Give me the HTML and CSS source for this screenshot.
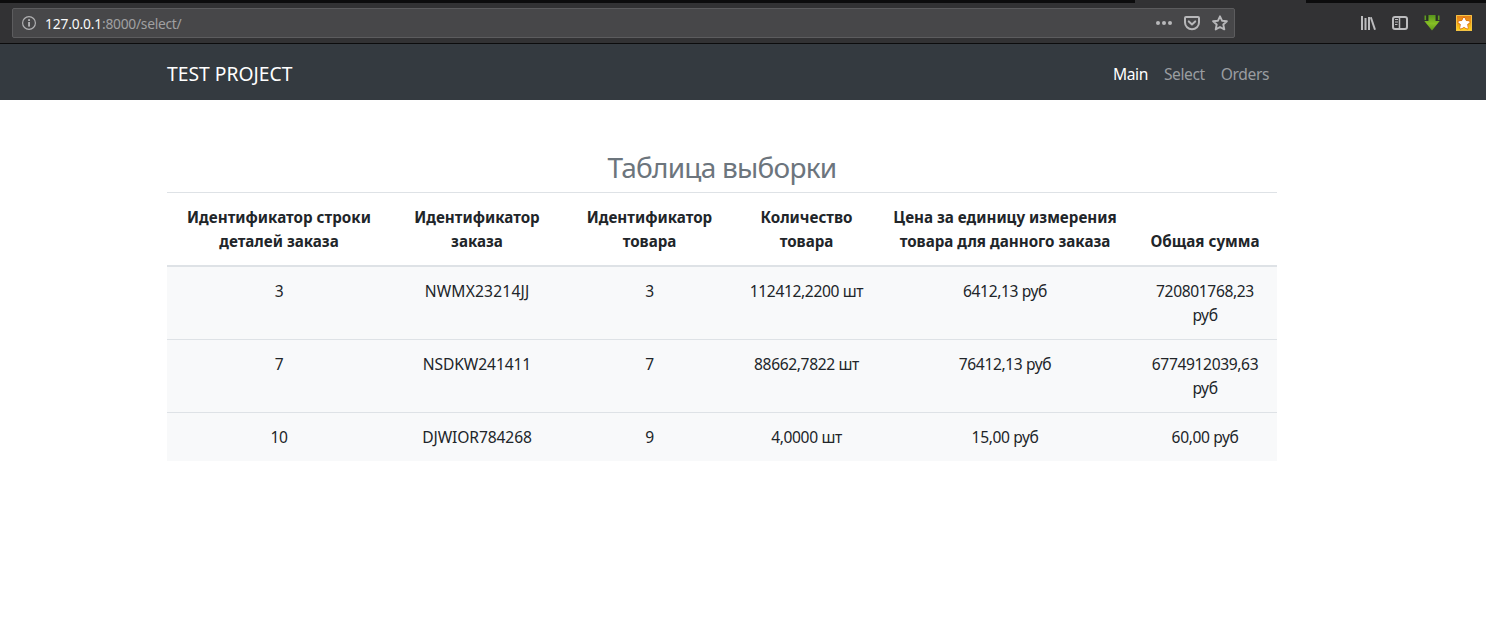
FILE: index.html
```
<!DOCTYPE html>
<html lang="ru">
<head>
<meta charset="utf-8">
<title>Test project</title>
<link rel="stylesheet" href="styles.css">
</head>
<body>
<div class="tabstrip"><div class="tab-active"></div></div>
<div class="toolbar">
  <div class="urlbar">
    <svg class="icon-info" width="16" height="16" viewBox="0 0 16 16"><circle cx="8" cy="8" r="6.4" fill="none" stroke="#b1b1b3" stroke-width="1.2"/><rect x="7.1" y="7" width="1.9" height="4.6" fill="#b1b1b3"/><rect x="7.1" y="4.2" width="1.9" height="1.8" fill="#b1b1b3"/></svg>
    <div class="url"><span class="host">127.0.0.1</span><span class="path">:8000/select/</span></div>
    <div class="page-actions">
      <svg width="16" height="16" viewBox="0 0 16 16" fill="#b8b8ba"><circle cx="2" cy="8" r="2"/><circle cx="8" cy="8" r="2"/><circle cx="14" cy="8" r="2"/></svg>
      <svg width="16" height="16" viewBox="0 0 16 16" fill="none" stroke="#b8b8ba" stroke-width="2" stroke-linecap="round" stroke-linejoin="round"><path d="M2 2h12a1 1 0 0 1 1 1v4.5a7 6.7 0 0 1-14 0V3a1 1 0 0 1 1-1z"/><path d="M4.8 6.4 8 9.4l3.2-3"/></svg>
      <svg width="16" height="16" viewBox="0 0 16 16" fill="none" stroke="#b8b8ba" stroke-width="1.9" stroke-linejoin="round"><path d="M8 1.3l2 4.4 4.9.5-3.6 3.3 1 4.9L8 12l-4.300 2.400 1-4.900L1.100 6.200 6 5.700z"/></svg>
    </div>
  </div>
  <div class="tools">
    <svg width="16" height="16" viewBox="0 0 16 16" fill="none" stroke="#bcbcbe" stroke-width="2"><path d="M2 1v14M5.500 3v12M9 2v13"/><path d="M10.800 2.200l4.200 12.500"/></svg>
    <svg width="16" height="16" viewBox="0 0 16 16" fill="none" stroke="#bcbcbe"><rect x="1" y="2" width="14" height="12" rx="2" stroke-width="2"/><path d="M7.500 2v12" stroke-width="1.500"/><path d="M3 4.500h3M3 7h3M3 9.500h2.500" stroke-width="1.200"/></svg>
    <svg width="16" height="16" viewBox="0 0 16 16"><defs><linearGradient id="g" x2="0" y2="1"><stop offset="0" stop-color="#56941c"/><stop offset=".55" stop-color="#86bf25"/><stop offset="1" stop-color="#5f991a"/></linearGradient></defs><path d="M4.500 0h7v6h4.200L8 15.500.300 6h4.200z" fill="url(#g)"/><path d="M1.300 .5v4.500M14.700 .5v4.500" stroke="#5f9a20" stroke-width="1.600"/><path d="M3.300 0v5.500M12.700 0v5.500" stroke="#26351b" stroke-width="1.200"/></svg>
    <svg width="16" height="16" viewBox="0 0 16 16"><defs><linearGradient id="o" x2="0" y2="1"><stop offset="0" stop-color="#e47a1b"/><stop offset=".55" stop-color="#f0a512"/><stop offset="1" stop-color="#ffd91e"/></linearGradient></defs><path fill="url(#o)" d="M0 0h16v16H0z"/><path d="M.5.500h15v15H.500z" fill="none" stroke="#f3c245"/><path d="M8 3l1.700 3.300 3.700.6-2.600 2.600.5 3.700L8 11.500l-3.300 1.700.5-3.700L2.600 6.900l3.700-.6z" fill="#fff" stroke="#d9700f" stroke-width="2.400" stroke-linejoin="round" paint-order="stroke"/><path d="M8 3l1.700 3.300 3.700.6-2.600 2.600.5 3.700L8 11.500l-3.300 1.700.5-3.700L2.600 6.900l3.700-.6z" fill="#fff" stroke="#fff" stroke-width=".9" stroke-linejoin="round"/></svg>
  </div>
</div>
<nav class="navbar">
  <div class="container nav-row">
    <a class="brand">TEST PROJECT</a>
    <div class="nav-links"><a class="link active">Main</a><a class="link">Select</a><a class="link">Orders</a></div>
  </div>
</nav>
<main class="container content">
  <h3 class="title">Таблица выборки</h3>
  <table class="table">
    <colgroup><col class="c1"><col class="c2"><col class="c3"><col class="c4"><col class="c5"><col class="c6"></colgroup>
    <thead><tr>
      <th>Идентификатор строки<br>деталей заказа</th>
      <th>Идентификатор<br>заказа</th>
      <th>Идентификатор<br>товара</th>
      <th>Количество<br>товара</th>
      <th>Цена за единицу измерения<br>товара для данного заказа</th>
      <th>Общая сумма</th>
    </tr></thead>
    <tbody>
      <tr><td>3</td><td class="code code-wide">NWMX23214JJ</td><td>3</td><td>112412,2200 шт</td><td>6412,13 руб</td><td>720801768,23<br>руб</td></tr>
      <tr><td>7</td><td class="code">NSDKW241411</td><td>7</td><td>88662,7822 шт</td><td>76412,13 руб</td><td>6774912039,63<br>руб</td></tr>
      <tr><td>10</td><td class="code">DJWIOR784268</td><td>9</td><td>4,0000 шт</td><td>15,00 руб</td><td>60,00 руб</td></tr>
    </tbody>
  </table>
</main>
</body>
</html>
```
FILE: styles.css
```
* { box-sizing: border-box; }
body { margin: 0; background: #fff; color: #212529; font: 15.2px/24px "Noto Sans", "Open Sans", sans-serif; }
svg { display: block; flex: none; }
.tabstrip { height: 3px; background: #0c0c0d; padding-left: 1135px; }
.tab-active { width: 171px; height: 3px; background: #323234; }
.toolbar { height: 41px; background: #323234; border-bottom: 1px solid #0c0c0d; padding: 5px 14px 0 12px; display: flex; justify-content: space-between; }
.urlbar { width: 1223px; height: 30px; background: #474749; border: 1px solid #5c5c5e; border-radius: 2px; display: flex; align-items: center; padding: 0 6px 0 8px; }
.url { flex: 1; margin-left: 8px; font-size: 13.8px; line-height: 28px; padding-top: 1px; }
.host { color: #f9f9fa; letter-spacing: -.15px; }
.path { color: #a0a0a2; letter-spacing: -.28px; }
.page-actions { display: flex; gap: 12px; }
.tools { display: flex; gap: 16px; height: 30px; align-items: center; }
.navbar { height: 56px; background: #343a40; }
.container { width: 1110px; margin-left: 167px; }
.nav-row { height: 56px; padding: 3px 8px 0 0; display: flex; justify-content: space-between; align-items: center; }
.brand { color: #fff; font-size: 19.3px; }
.nav-links { display: flex; gap: 16px; font-size: 15.6px; letter-spacing: -.4px; }
.link { color: #9a9da0; }
.link.active { color: #fff; }
.content { padding-top: 50px; }
.title { margin: 0; height: 42px; font-size: 28px; font-weight: 400; line-height: 34px; letter-spacing: -.75px; text-align: center; color: #6c757d; }
.table { width: 1110px; table-layout: fixed; border-spacing: 0; text-align: center; }
.c1 { width: 224px; }
.c2 { width: 172px; }
.c3 { width: 173px; }
.c4 { width: 141px; }
.c5 { width: 256px; }
.c6 { width: 144px; }
th, td { padding: 12px 0; white-space: nowrap; }
th { border-top: 1px solid #dee2e6; border-bottom: 2px solid #dee2e6; vertical-align: bottom; font-weight: 700; }
td { background: #f8f9fa; vertical-align: top; border-top: 1px solid #dee2e6; font-size: 15.6px; letter-spacing: -.37px; }
.code { letter-spacing: -.1px; }
.code-wide { letter-spacing: .18px; }
tbody tr:first-child td { border-top: 0; }
```
